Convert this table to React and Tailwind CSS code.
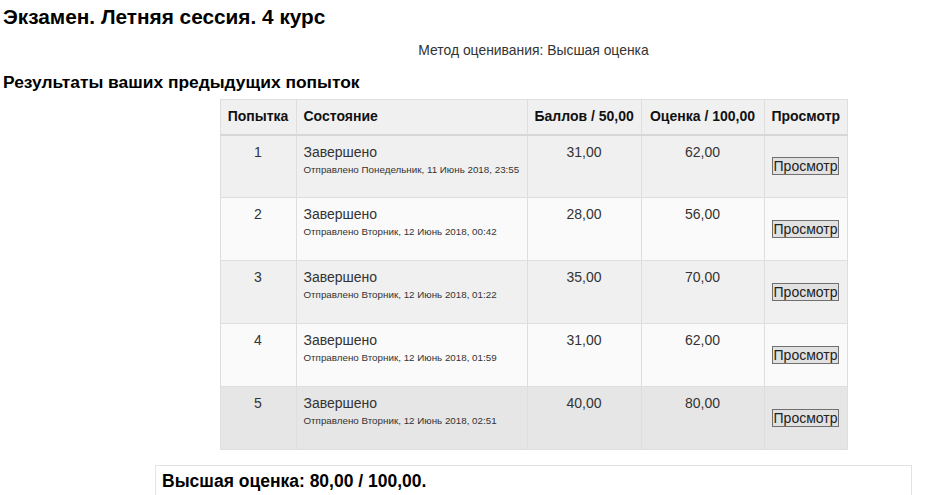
import React from "react";

const attempts = [
  { n: 1, sent: "Отправлено Понедельник, 11 Июнь 2018, 23:55", score: "31,00", grade: "62,00", bg: "bg-[#f0f0f0]" },
  { n: 2, sent: "Отправлено Вторник, 12 Июнь 2018, 00:42", score: "28,00", grade: "56,00", bg: "bg-[#fafafa]" },
  { n: 3, sent: "Отправлено Вторник, 12 Июнь 2018, 01:22", score: "35,00", grade: "70,00", bg: "bg-[#f0f0f0]" },
  { n: 4, sent: "Отправлено Вторник, 12 Июнь 2018, 01:59", score: "31,00", grade: "62,00", bg: "bg-[#fafafa]" },
  { n: 5, sent: "Отправлено Вторник, 12 Июнь 2018, 02:51", score: "40,00", grade: "80,00", bg: "bg-[#e6e6e6]" },
];

const headers = [
  { label: "Попытка", w: "w-[76px]", align: "text-center" },
  { label: "Состояние", w: "w-[231px]", align: "text-left" },
  { label: "Баллов / 50,00", w: "w-[114px]", align: "text-center" },
  { label: "Оценка / 100,00", w: "w-[123px]", align: "text-center" },
  { label: "Просмотр", w: "w-[83px]", align: "text-center" },
];

export default function App() {
  return (
    <div className="min-h-screen bg-white text-[#1a1a1a] font-['Liberation_Sans',Arial,sans-serif] pl-[3px]">
      {/* Title */}
      <h2 className="pt-[5px] text-[20.8px] leading-[23px] font-bold text-black">Экзамен. Летняя сессия. 4 курс</h2>

      {/* Grading method */}
      <div className="ml-[152px] w-[757px] mt-[15px] text-center text-[13.9px] leading-[15px] text-[#333]">
        Метод оценивания: Высшая оценка
      </div>

      {/* Section heading */}
      <h3 className="mt-[14px] text-[17.4px] leading-[20px] font-bold text-black">Результаты ваших предыдущих попыток</h3>

      {/* Attempts table */}
      <div className="ml-[152px] w-[757px] mt-[7px] flex justify-center">
        <table className="border-collapse table-fixed w-[627px] text-[#333]">
          <thead>
            <tr className="bg-[#f0f0f0] h-[35px]">
              {headers.map((h) => (
                <th key={h.label} className={`${h.w} ${h.align} border border-[#dedede] border-b-2 border-b-[#d6d6d6] px-[7px] text-[14px] font-bold text-[#111] align-middle whitespace-nowrap`}>
                  {h.label}
                </th>
              ))}
            </tr>
          </thead>
          <tbody>
            {attempts.map((a) => (
              <tr key={a.n} className={`${a.bg} h-[63px]`}>
                <td className="border border-[#dedede] text-center align-top pt-[8px] text-[14px] leading-[16px]">{a.n}</td>
                <td className="border border-[#dedede] align-top pt-[8px] px-[7px]">
                  <div className="text-[14px] leading-[16px]">Завершено</div>
                  <div className="text-[9.8px] leading-[13px] mt-[3px] whitespace-nowrap">{a.sent}</div>
                </td>
                <td className="border border-[#dedede] text-center align-top pt-[8px] text-[14px] leading-[16px]">{a.score}</td>
                <td className="border border-[#dedede] text-center align-top pt-[8px] text-[14px] leading-[16px]">{a.grade}</td>
                <td className="border border-[#dedede] text-center align-middle">
                  <button className="h-[18px] px-[1px] text-[14px] leading-[16px] font-normal bg-[#e1e1e1] border border-[#707070] text-[#222]">
                    Просмотр
                  </button>
                </td>
              </tr>
            ))}
          </tbody>
        </table>
      </div>

      {/* Highest grade */}
      <div className="ml-[152px] w-[757px] mt-[15px] border border-[#e3e3e3] bg-white h-[40px] px-[6px] pt-[5px]">
        <div className="text-[17.5px] leading-[20px] font-bold text-black">Высшая оценка: 80,00 / 100,00.</div>
      </div>
    </div>
  );
}
